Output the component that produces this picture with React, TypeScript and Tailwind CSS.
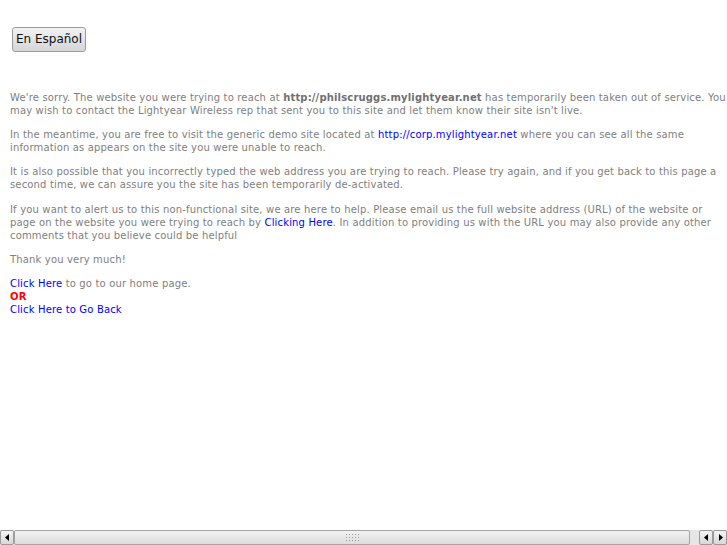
const Arrow = ({ dir }: { dir: 'left' | 'right' }) => (
  <svg width="5" height="7" viewBox="0 0 5 7">
    {dir === 'left' ? <path d="M4 0 L0 3.5 L4 7 Z" fill="#000" /> : <path d="M1 0 L5 3.5 L1 7 Z" fill="#000" />}
  </svg>
);

const ScrollButton = ({ dir }: { dir: 'left' | 'right' }) => (
  <div className="flex h-[15px] w-[14px] items-center justify-center rounded-[2px] border border-[#9a9a9a] bg-gradient-to-b from-[#f4f4f4] to-[#d8d8d8]">
    <Arrow dir={dir} />
  </div>
);

const Scrollbar = () => (
  <div className="flex h-[15px] w-full items-center bg-[#e6e6e6]">
    <ScrollButton dir="left" />
    <div className="flex h-[15px] w-[676px] items-center justify-center rounded-[2px] border border-[#a4a4a4] bg-gradient-to-b from-[#f2f2f2] to-[#dcdcdc]">
      <div className="grid grid-cols-5 gap-x-[2px] gap-y-[2px]">
        {Array.from({ length: 15 }).map((_, i) => (
          <div key={i} className="h-[1px] w-[1px] bg-[#9a9a9a]" />
        ))}
      </div>
    </div>
    <div className="flex-1" />
    <ScrollButton dir="left" />
    <ScrollButton dir="right" />
  </div>
);

export default function App() {
  const link = 'text-[#0000ff] no-underline';
  return (
    <div className="flex h-[545px] w-[727px] flex-col overflow-hidden bg-white font-['DejaVu_Sans',sans-serif]">
      <div className="flex-1 overflow-hidden">
        <div className="pl-[12px] pt-[26px]">
          <button className="h-[25px] w-[74px] rounded-[3px] border border-[#9c9c9c] bg-gradient-to-b from-[#f2f2f2] to-[#d6d6d6] text-[12px] text-[#111]">
            En Español
          </button>
        </div>
        <div className="w-[730px] pl-[10px] pt-[39px] text-[10px] leading-[13px] tracking-[0.16px] text-[#808080]">
          <p className="mb-[11.4px]">
            We're sorry. The website you were trying to reach at <b className="text-[#707070]">http://philscruggs.mylightyear.net</b> has temporarily been taken out of service. You may wish to contact the Lightyear Wireless rep that sent you to this site and let them know their site isn't live.
          </p>
          <p className="mb-[11.4px]">
            In the meantime, you are free to visit the generic demo site located at <a className={link} href="#">http://corp.mylightyear.net</a> where you can see all the same information as appears on the site you were unable to reach.
          </p>
          <p className="mb-[11.4px]">
            It is also possible that you incorrectly typed the web address you are trying to reach. Please try again, and if you get back to this page a second time, we can assure you the site has been temporarily de-activated.
          </p>
          <p className="mb-[11.4px]">
            If you want to alert us to this non-functional site, we are here to help. Please email us the full website address (URL) of the website or page on the website you were trying to reach by <a className={link} href="#">Clicking Here</a>. In addition to providing us with the URL you may also provide any other comments that you believe could be helpful
          </p>
          <p className="mb-[11.4px]">Thank you very much!</p>
          <p>
            <a className={link} href="#">Click Here</a> to go to our home page.
            <br />
            <b className="text-[#ff0000]">OR</b>
            <br />
            <a className={link} href="#">Click Here to Go Back</a>
          </p>
        </div>
      </div>
      <Scrollbar />
    </div>
  );
}
